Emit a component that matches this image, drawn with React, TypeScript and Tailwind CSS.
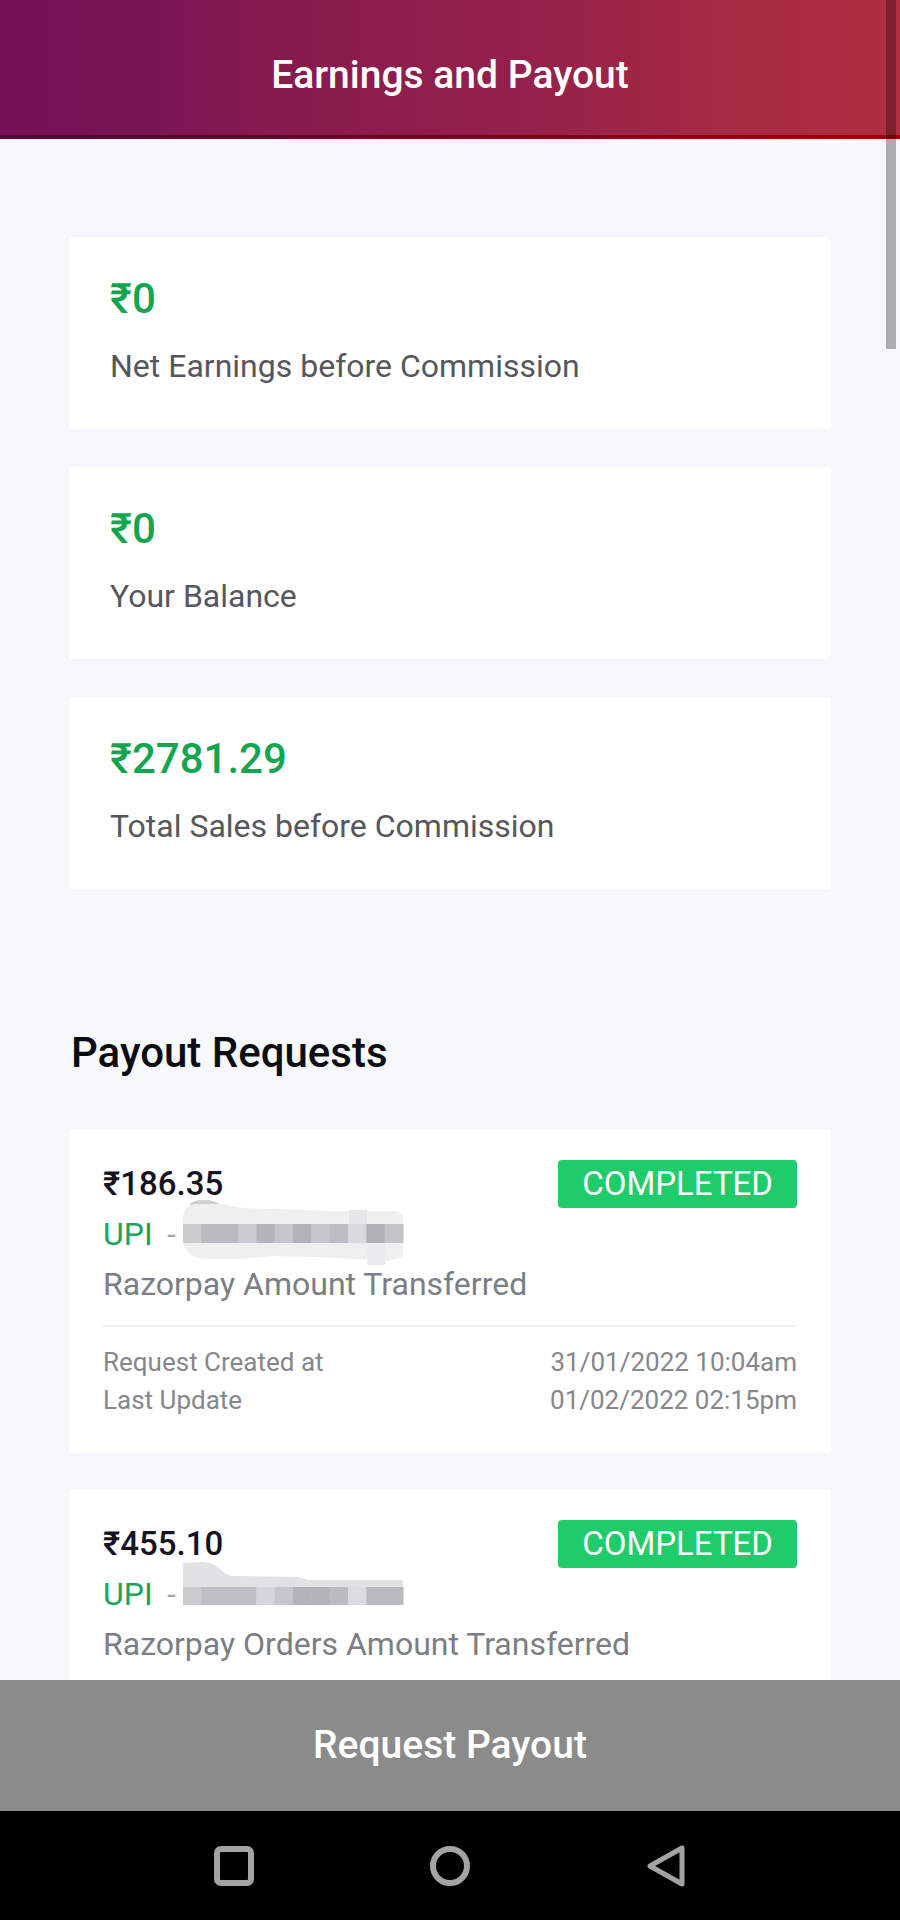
import type { ReactNode } from 'react';

const stats = [
  { amount: '₹0', label: 'Net Earnings before Commission' },
  { amount: '₹0', label: 'Your Balance' },
  { amount: '₹2781.29', label: 'Total Sales before Commission' },
];

type Payout = {
  amount: string;
  note: string;
  account: ReactNode;
  dates?: { label: string; value: string }[];
};

function Cells({ fills, y, height }: { fills: string[]; y: number; height: number }) {
  const size = 220 / fills.length;
  return (
    <>
      {fills.map((fill, i) => (
        <rect key={i} x={i * size} y={y} width={size + 0.5} height={height} fill={fill} />
      ))}
    </>
  );
}

function MaskedAccountA() {
  return (
    <svg viewBox="0 0 220 50" className="h-[50px] w-[220px] overflow-visible" role="img" aria-label="Hidden account">
      <path d="M6 -4Q10 -9 20 -9Q32 -9 38 -4Z" fill="#cfcfd0" />
      <path d="M0 8Q2 -5 14 -5H38L60 -1L150 2H210Q220 2 220 10V48L204 52L186 51L150 49L130 48L90 47L60 50H24Q4 49 0 34Z" fill="#efeff0" />
      <rect x="166" y="1" width="18" height="14" fill="#e6e6e8" />
      <rect x="184" y="34" width="18" height="22" fill="#ebebed" />
      <Cells
        y={15}
        height={19}
        fills={['#cbcbcf', '#b9babd', '#b9babd', '#cbcbcf', '#b4b5b9', '#c5c5ca', '#b2b3b7', '#c6c6cb', '#bcbdc1', '#d8d8dd', '#b0b1b5', '#c3c3c8']}
      />
    </svg>
  );
}

function MaskedAccountB() {
  return (
    <svg viewBox="0 0 220 50" className="h-[50px] w-[220px] overflow-visible" role="img" aria-label="Hidden account">
      <path d="M0 -6L20 -7Q32 -7 40 3L48 7L115 8L125 11H220V20H0Z" fill="#e2e2e5" />
      <Cells
        y={18}
        height={18}
        fills={['#ccccd0', '#bebec4', '#bebec4', '#bebec4', '#d5d5da', '#c5c5ca', '#b3b3b9', '#b3b3b9', '#bbbbc0', '#dcdce0', '#b9b9bf', '#b9b9bf']}
      />
    </svg>
  );
}

const payouts: Payout[] = [
  {
    amount: '₹186.35',
    note: 'Razorpay Amount Transferred',
    account: <MaskedAccountA />,
    dates: [
      { label: 'Request Created at', value: '31/01/2022 10:04am' },
      { label: 'Last Update', value: '01/02/2022 02:15pm' },
    ],
  },
  {
    amount: '₹455.10',
    note: 'Razorpay Orders Amount Transferred',
    account: <MaskedAccountB />,
  },
];

function PayoutCard({ payout }: { payout: Payout }) {
  return (
    <article className="rounded-sm bg-white px-[34px] pt-[30px] pb-[34px] shadow-[0_0_8px_rgba(0,0,0,0.02)] last:grow last:rounded-b-none">
      <div className="flex h-[50px] items-center justify-between">
        <span className="text-[33px] font-medium text-[#15131f]">{payout.amount}</span>
        <span className="rounded-sm bg-[#1fcb6b] px-6 text-[33px] leading-[48px] text-white">COMPLETED</span>
      </div>
      <div className="flex h-[50px] items-center text-[32px]">
        <span className="w-[64px] text-[#18a558]">UPI</span>
        <span className="w-4 text-[#a5a7ab]">-</span>
        {payout.account}
      </div>
      <p className="text-[32px] leading-[50px] text-[#7b7e83]">{payout.note}</p>
      {payout.dates && (
        <dl className="mt-4 border-t-2 border-[#efeff0] pt-4 text-[26px] leading-[38px] text-[#85878b]">
          {payout.dates.map((date) => (
            <div key={date.label} className="flex justify-between">
              <dt>{date.label}</dt>
              <dd>{date.value}</dd>
            </div>
          ))}
        </dl>
      )}
    </article>
  );
}

export default function App() {
  return (
    <div className="relative flex h-screen flex-col overflow-hidden bg-[#f6f8fc] font-['Roboto',sans-serif]">
      <header className="shrink-0 border-b-4 border-[#8d0713] bg-[linear-gradient(90deg,#731154_0%,#7a1554_18%,#861a4e_30%,#96214a_60%,#a42a43_80%,#b02e40_100%)] bg-origin-border pt-[47px] pb-8 [border-image:linear-gradient(90deg,#5c0038,#780020_50%,#a00008)_1]">
        <h1 className="text-center text-[39px] leading-[56px] font-medium text-white">Earnings and Payout</h1>
      </header>

      <main className="flex min-h-0 flex-1 flex-col overflow-hidden px-[69px] pt-[98px]">
        <section className="flex flex-col gap-[38px]">
          {stats.map((stat) => (
            <article
              key={stat.label}
              className="rounded-sm bg-white px-[41px] pt-9 pb-10 shadow-[0_0_8px_rgba(0,0,0,0.02)]"
            >
              <p className="text-[42px] leading-[52px] font-medium text-[#14a551]">{stat.amount}</p>
              <p className="mt-[18px] text-[32px] leading-[46px] text-[#55575c]">{stat.label}</p>
            </article>
          ))}
        </section>

        <h2 className="mt-[140px] px-0.5 text-[42px] leading-[48px] font-medium text-[#0c0d10]">Payout Requests</h2>
        <section className="mt-[52px] flex flex-1 flex-col gap-9">
          {payouts.map((payout) => (
            <PayoutCard key={payout.amount} payout={payout} />
          ))}
        </section>
      </main>

      <button
        type="button"
        className="shrink-0 bg-[#8b8b8b] py-[37px] text-center text-[39px] leading-[57px] font-medium text-white"
      >
        Request Payout
      </button>

      <nav className="flex h-[109px] shrink-0 items-center justify-center gap-[174px] bg-black text-[#a3a3a3]">
        <button type="button" aria-label="Recent apps">
          <svg viewBox="0 0 42 42" className="size-[42px]" fill="none" stroke="currentColor" strokeWidth="6">
            <rect x="4" y="4" width="34" height="34" rx="4" />
          </svg>
        </button>
        <button type="button" aria-label="Home">
          <svg viewBox="0 0 42 42" className="size-[42px]" fill="none" stroke="currentColor" strokeWidth="6">
            <circle cx="21" cy="21" r="17" />
          </svg>
        </button>
        <button type="button" aria-label="Back">
          <svg viewBox="0 0 42 42" className="size-[42px]" fill="none" stroke="currentColor" strokeWidth="5" strokeLinejoin="round">
            <path d="M37 3V39L5 21Z" />
          </svg>
        </button>
      </nav>

      <div className="pointer-events-none absolute top-0 right-1 h-[349px] w-[10px] bg-black/30" />
    </div>
  );
}
